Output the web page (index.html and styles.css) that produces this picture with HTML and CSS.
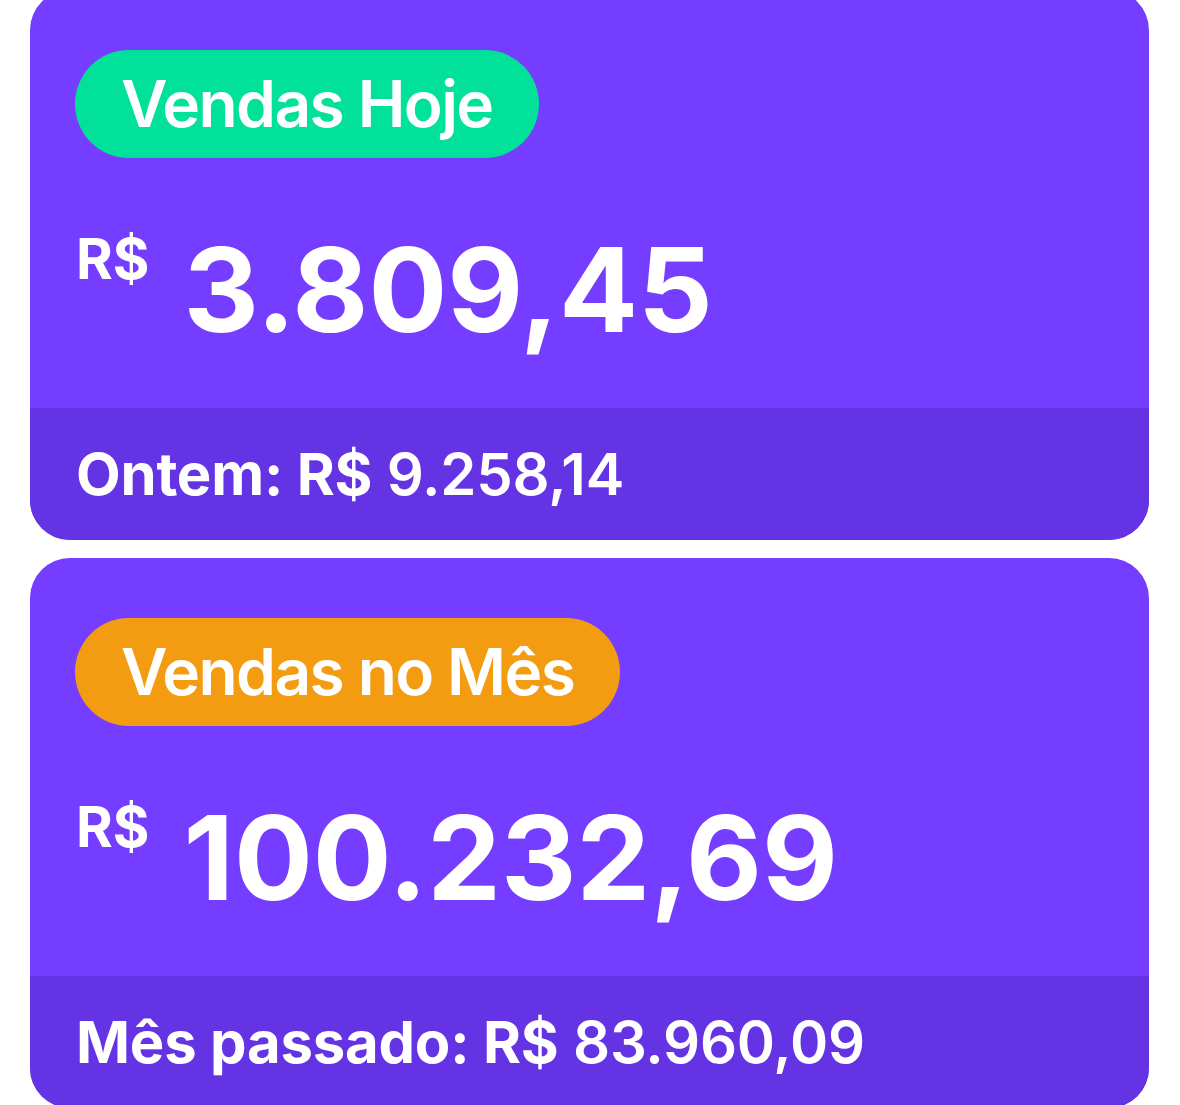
FILE: index.html
```html
<!DOCTYPE html>
<html lang="pt-BR">
<head>
<meta charset="utf-8">
<title>Vendas</title>
<link rel="stylesheet" href="styles.css">
</head>
<body>
<main class="page">
  <section class="card">
    <div class="card-body">
      <span class="badge badge-green">Vendas Hoje</span>
      <div class="amount">
        <span class="currency">R$</span>
        <span class="value">3.809,45</span>
      </div>
    </div>
    <div class="card-footer"><strong>Ontem: R$</strong> 9.258,14</div>
  </section>
  <section class="card">
    <div class="card-body">
      <span class="badge badge-orange">Vendas no Mês</span>
      <div class="amount">
        <span class="currency">R$</span>
        <span class="value">100.232,69</span>
      </div>
    </div>
    <div class="card-footer"><strong>Mês passado: R$</strong> 83.960,09</div>
  </section>
</main>
</body>
</html>
```
FILE: styles.css
```css
* { box-sizing: border-box; }
html, body { margin: 0; padding: 0; background: #ffffff; }
body {
  font-family: Inter, "Noto Sans", "Liberation Sans", sans-serif;
  color: #ffffff;
  overflow: hidden;
}
.page {
  display: flex;
  flex-direction: column;
  gap: 18px;
  padding: 0 31px 0 30px;
  margin-top: -10px;
}
.card {
  background: #753dff;
  border-radius: 40px;
  overflow: hidden;
}
.card-body {
  height: 418px;
  padding: 60px 45px 0 45px;
  display: flex;
  flex-direction: column;
  align-items: flex-start;
}
.badge {
  display: inline-flex;
  align-items: center;
  height: 108px;
  padding: 0 46px 0 46px;
  border-radius: 54px;
  font-size: 64px;
  font-weight: 600;
  letter-spacing: -1.6px;
  line-height: 1;
}
.badge-green { background: #02e199; }
.badge-orange { background: #f39c12; }
.amount {
  display: flex;
  align-items: flex-start;
  margin-top: 73px;
  gap: 34px;
}
.currency {
  font-size: 56px;
  font-weight: 700;
  line-height: 1;
  margin-top: 0px;
  padding-left: 1px;
}
.value {
  font-size: 117px;
  font-weight: 700;
  line-height: 1;
  letter-spacing: 0;
}
.card-footer {
  height: 132px;
  background: #6333e4;
  display: flex;
  align-items: center;
  padding: 0 46px;
  font-size: 58px;
  font-weight: 600;
  letter-spacing: -0.2px;
  white-space: pre;
}
.card-footer strong { font-weight: 700; }
```
